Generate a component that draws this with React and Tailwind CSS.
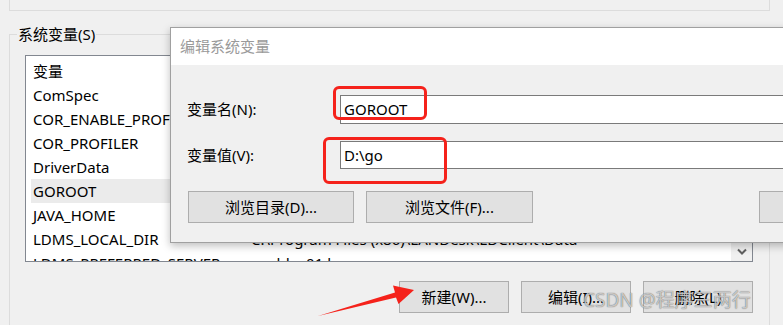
import { useState } from 'react';

const rows = [
  { name: 'ComSpec', value: 'C:\\Windows\\system32\\cmd.exe' },
  { name: 'COR_ENABLE_PROFILING', value: '1' },
  { name: 'COR_PROFILER', value: '{C8DE0F0A-8F2D-4F9B-8E16-0BA1D2C0F2A1}' },
  { name: 'DriverData', value: 'C:\\Windows\\System32\\Drivers\\DriverData' },
  { name: 'GOROOT', value: 'D:\\go' },
  { name: 'JAVA_HOME', value: 'C:\\Program Files\\Java\\jdk1.8.0_301' },
  { name: 'LDMS_LOCAL_DIR', value: 'C:\\Program Files (x86)\\LANDesk\\LDClient\\Data' },
  { name: 'LDMS_PREFERRED_SERVER', value: 'ucoldsp01.b' },
];

export default function App() {
  const [selected] = useState('GOROOT');

  return (
    <div className="relative w-[783px] h-[325px] overflow-hidden bg-[#f0f0f0] text-[15px] text-black font-['Noto_Sans','Noto_Sans_CJK_SC',sans-serif]">
      {/* bottom of the user variables group */}
      <div className="ml-[9px] w-[761px] h-[11px] border-l border-r border-b border-[#dcdcdc]" />

      <fieldset className="ml-[9px] mt-[13px] w-[761px] h-[320px] border-l border-r border-t border-[#dcdcdc]">
        <legend className="ml-[7px] px-[1px] leading-[20px]">系统变量(S)</legend>

        <div className="ml-[15px] mt-[11px] w-[728px] h-[207px] border border-[#828790] bg-white flex overflow-hidden">
          <div className="flex-1 pl-[5px] pt-[3px]">
            <div className="h-[24px] flex items-center leading-[24px]">
              <span className="w-[220px] pl-[2px]">变量</span>
              <span>值</span>
            </div>
            {rows.map((r) => (
              <div
                key={r.name}
                className={`h-[24px] flex items-center leading-[24px] whitespace-nowrap ${r.name === selected ? 'bg-[#ebebeb]' : ''}`}
              >
                <span className="w-[220px] pl-[2px] shrink-0">{r.name}</span>
                <span>{r.value}</span>
              </div>
            ))}
          </div>
          <div className="w-[21px] flex flex-col justify-end">
            <div className="h-[19px] bg-[#f0f0f0] flex items-center justify-center">
              <svg width="10" height="7" viewBox="0 0 10 7">
                <path d="M1 1.5 L5 5.5 L9 1.5" fill="none" stroke="#606060" strokeWidth="2" />
              </svg>
            </div>
          </div>
        </div>

        <div className="mt-[19px] flex justify-end gap-[12px] pr-[16px]">
          <WinButton className="w-[110px]">新建(W)...</WinButton>
          <WinButton className="w-[110px]">编辑(I)...</WinButton>
          <WinButton className="w-[110px]">删除(L)</WinButton>
        </div>
      </fieldset>

      {/* edit dialog window */}
      <div className="absolute left-[170px] top-[27px] w-[760px] h-[216px] overflow-hidden border border-[#a0a0a0] bg-[#f0f0f0] shadow-[0_3px_8px_rgba(0,0,0,0.25)]">
        <div className="h-[37px] bg-white pl-[9px] flex items-center text-[#9a9a9a]">编辑系统变量</div>
        <div className="pl-[16px]">
          <div className="mt-[30px] flex items-center">
            <span className="w-[153px] shrink-0">变量名(N):</span>
            <div className="h-[29px] w-[500px] shrink-0 border border-[#7a7a7a] bg-white pl-[3px] flex items-center">GOROOT</div>
          </div>
          <div className="mt-[17px] flex items-center">
            <span className="w-[153px] shrink-0">变量值(V):</span>
            <div className="h-[28px] w-[500px] shrink-0 border border-[#7a7a7a] bg-white pl-[3px] flex items-center">D:\go</div>
          </div>
          <div className="mt-[22px] flex">
            <WinButton className="ml-[1px] w-[166px]">浏览目录(D)...</WinButton>
            <WinButton className="ml-[12px] w-[167px]">浏览文件(F)...</WinButton>
            <WinButton className="ml-[226px] w-[166px]">删除(D)</WinButton>
          </div>
        </div>
      </div>

      {/* red annotations */}
      <div className="absolute left-[333px] top-[86px] w-[94px] h-[34px] border-[3px] border-[#f5221b] rounded-[6px]" />
      <div className="absolute left-[323px] top-[137px] w-[124px] h-[47px] border-[3px] border-[#f5221b] rounded-[6px]" />
      <svg className="absolute left-0 top-0" width="783" height="325" viewBox="0 0 783 325">
        <polygon points="318,316 396,297.5 398.5,304 414,290 393,285.5 395,292.5" fill="#f5221b" />
      </svg>

      <div className="absolute left-[583px] top-[288px] text-[19px] leading-[24px] whitespace-nowrap text-[rgba(235,235,235,0.75)] [text-shadow:0_0_1px_rgba(0,0,0,0.7)]">
        CSDN @程序三两行
      </div>
    </div>
  );
}

function WinButton({ className = '', children }) {
  return (
    <div className={`h-[32px] shrink-0 border border-[#adadad] bg-[#e1e1e1] flex items-center justify-center ${className}`}>
      {children}
    </div>
  );
}
